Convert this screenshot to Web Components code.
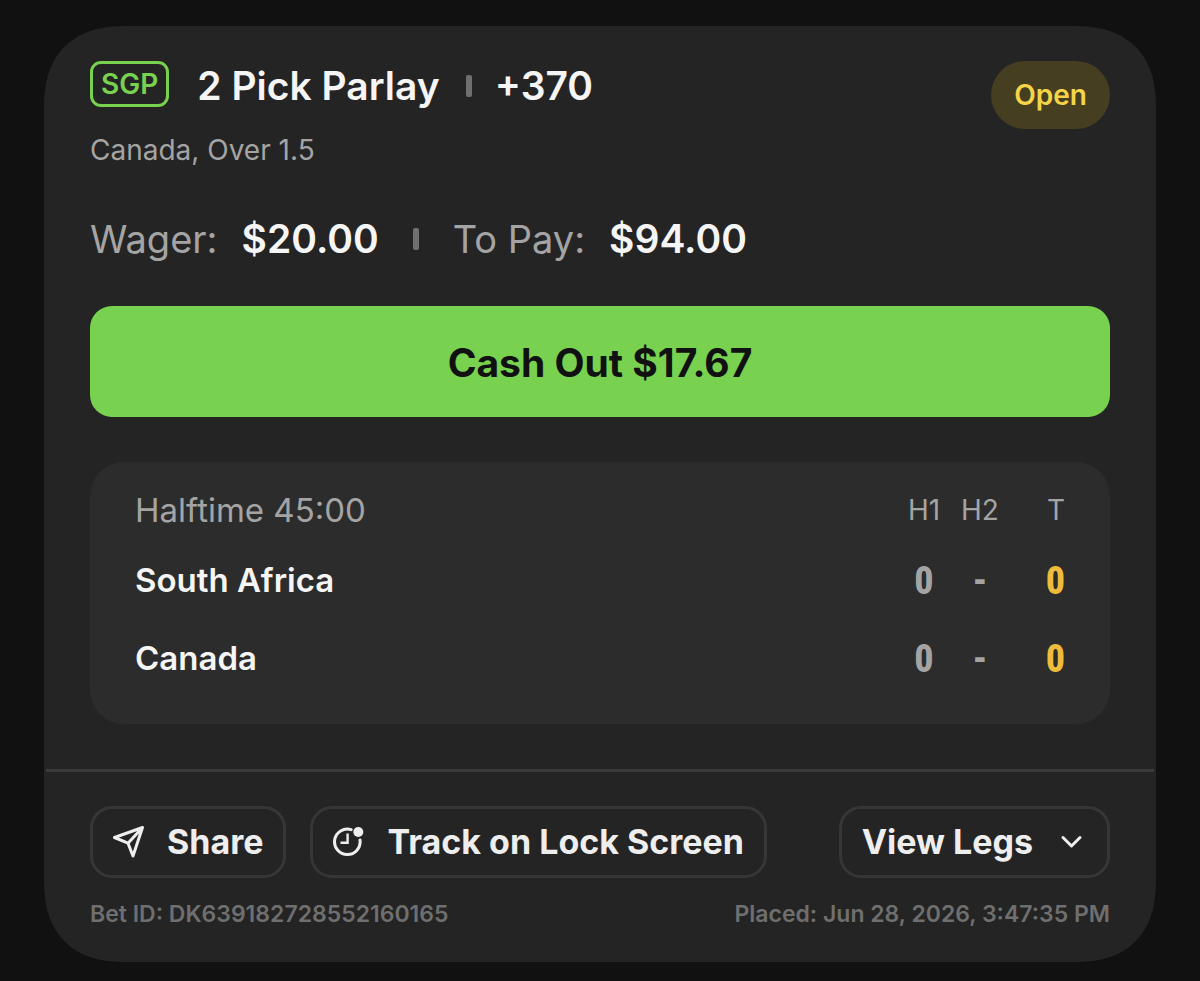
<!doctype html>
<html lang="en">
<head>
<meta charset="utf-8">
<meta name="viewport" content="width=device-width, initial-scale=1">
<title>Open bet</title>
<style>
:root {
  --page: #111111;
  --card: #242424;
  --panel: #2c2c2c;
  --line: #3a3a3a;
  --text: #f5f5f5;
  --muted: #a4a4a4;
  --faint: #6f6f6f;
  --green: #78d250;
  --yellow: #f5d547;
  --gold: #eebb3a;
}

body {
  margin: 0;
  padding: 26px 44px 18px;
  background: var(--page);
  color: var(--text);
  font-family: Inter, "Liberation Sans", sans-serif;
}
</style>
</head>
<body>

<bet-card>
  <bet-heading slot="heading" tag="SGP" odds="+370" status="Open">
    2 Pick Parlay
    <span slot="picks">Canada, Over 1.5</span>
  </bet-heading>
  <bet-stakes wager="$20.00" pay="$94.00"></bet-stakes>
  <cash-out>Cash Out $17.67</cash-out>
  <score-board clock="Halftime 45:00" periods="H1,H2,T">
    <score-line name="South Africa" scores="0,-,0"></score-line>
    <score-line name="Canada" scores="0,-,0"></score-line>
  </score-board>
  <bet-action slot="actions" icon="share">Share</bet-action>
  <bet-action slot="actions" icon="track">Track on Lock Screen</bet-action>
  <bet-action slot="actions" icon="chevron" class="end">View Legs</bet-action>
  <span slot="id">Bet ID: DK639182728552160165</span>
  <span slot="placed">Placed: Jun 28, 2026, 3:47:35 PM</span>
</bet-card>

<script>
class ShadowElement extends HTMLElement {
  constructor() {
    super();
    this.attachShadow({ mode: "open" });
  }

  connectedCallback() {
    this.shadowRoot.innerHTML = this.render();
  }

  attr(name) {
    return this.getAttribute(name) || "";
  }
}

class BetCard extends ShadowElement {
  render() {
    return `
<style>
:host {
  display: block;
  background: var(--card);
  border-radius: 66px;
}

@supports (corner-shape: superellipse(1.3)) {
  :host {
    border-radius: 84px;
    corner-shape: superellipse(1.3);
  }
}

.main {
  display: flex;
  flex-direction: column;
  padding: 35px 46px 45px;
}

footer {
  margin: 0 2px;
  padding: 34px 44px 34px;
  border-top: 3px solid var(--line);
}

.actions {
  display: flex;
  gap: 24px;
}

::slotted(.end) {
  margin-left: auto;
}

.meta {
  display: flex;
  justify-content: space-between;
  margin-top: 22px;
  color: var(--faint);
  font-size: 23px;
  font-weight: 600;
  line-height: 28px;
}
</style>
<div class="main">
  <slot name="heading"></slot>
  <slot></slot>
</div>
<footer>
  <div class="actions"><slot name="actions"></slot></div>
  <div class="meta"><slot name="id"></slot><slot name="placed"></slot></div>
</footer>
`;
  }
}

class BetHeading extends ShadowElement {
  render() {
    return `
<style>
:host {
  display: flex;
  justify-content: space-between;
  align-items: flex-start;
}

.title {
  display: flex;
  align-items: center;
  font-size: 39px;
  font-weight: 600;
  line-height: 50px;
}

.tag {
  box-sizing: border-box;
  align-self: flex-start;
  height: 46px;
  margin-right: 28px;
  padding: 0 8px;
  border: 3px solid var(--green);
  border-radius: 11px;
  color: var(--green);
  font-size: 28px;
  line-height: 40px;
}

h1 {
  margin: 0;
  font: inherit;
}

.bar {
  width: 6px;
  height: 22px;
  margin: 0 23px 0 26px;
  border-radius: 2px;
  background: var(--faint);
}

.picks {
  margin-top: 22px;
  color: var(--muted);
  font-size: 28px;
  font-weight: 400;
  line-height: 34px;
}

.status {
  padding: 0 23px;
  border-radius: 34px;
  background: #453e21;
  color: var(--yellow);
  font-size: 28px;
  font-weight: 600;
  line-height: 68px;
}
</style>
<div>
  <div class="title">
    <span class="tag">${this.attr("tag")}</span>
    <h1><slot></slot></h1>
    <i class="bar"></i>
    <span>${this.attr("odds")}</span>
  </div>
  <div class="picks"><slot name="picks"></slot></div>
</div>
<span class="status">${this.attr("status")}</span>
`;
  }
}

class BetStakes extends ShadowElement {
  render() {
    return `
<style>
:host {
  display: flex;
  align-items: center;
  margin: 47px 0 42px;
  color: var(--muted);
  font-size: 38px;
  font-weight: 400;
  line-height: 50px;
}

b {
  margin-left: 24px;
  color: var(--text);
  font-size: 39px;
  font-weight: 600;
}

.bar {
  width: 6px;
  height: 22px;
  margin: 0 34px;
  border-radius: 2px;
  background: var(--faint);
}
</style>
<span>Wager:</span><b>${this.attr("wager")}</b>
<i class="bar"></i>
<span>To Pay:</span><b>${this.attr("pay")}</b>
`;
  }
}

class CashOut extends ShadowElement {
  render() {
    return `
<style>
:host {
  display: block;
}

button {
  display: block;
  width: 100%;
  padding: 32px 30px 29px;
  border: 0;
  border-radius: 22px;
  background: var(--green);
  color: #111;
  font: inherit;
  font-size: 39px;
  font-weight: 700;
  line-height: 50px;
  cursor: pointer;
}
</style>
<button type="button"><slot></slot></button>
`;
  }
}

// holds the data for one team, the board draws it
class ScoreLine extends HTMLElement {
  get scores() {
    return this.getAttribute("scores").split(",");
  }
}

class ScoreBoard extends ShadowElement {
  render() {
    var periods = this.attr("periods").split(",");
    var head = periods.map(p => `<th scope="col">${p}</th>`).join("");
    var rows = [...this.querySelectorAll("score-line")].map(line => `
  <tr>
    <th scope="row">${line.getAttribute("name")}</th>
    ${line.scores.map(s => `<td>${s}</td>`).join("")}
  </tr>`).join("");
    return `
<style>
:host {
  display: block;
  margin-top: 45px;
  padding: 18px 45px 28px;
  border-radius: 34px;
  background: var(--panel);
}

table {
  width: 100%;
  border-collapse: collapse;
  table-layout: fixed;
}

th, td {
  width: 56px;
  height: 78px;
  padding: 0;
  box-sizing: border-box;
  text-align: center;
}

thead th {
  height: 60px;
  color: var(--muted);
  font-size: 28px;
  font-weight: 400;
}

th:first-child {
  width: auto;
  text-align: left;
  font-size: 33px;
}

tbody th {
  padding-top: 2px;
  font-weight: 600;
}

td {
  padding-top: 4px;
  color: var(--muted);
  font-family: "Roboto Condensed", "Liberation Sans Narrow", Roboto, sans-serif;
  font-size: 38px;
  font-weight: 800;
}

th:last-child, td:last-child {
  width: 57px;
  text-align: right;
}

td:last-child {
  color: var(--gold);
}
</style>
<table>
  <thead><tr><th scope="col">${this.attr("clock")}</th>${head}</tr></thead>
  <tbody>${rows}</tbody>
</table>
`;
  }
}

const ICONS = {
  share: `<path d="M1.5 11.5 29.5 1.5 20 30 15 17.2Z M15 17.2 29.5 1.5"/>`,
  track: `
    <path d="M18.2 3.6A12.8 12.8 0 1 0 27 14"/>
    <path d="M14.6 7.5V16.8H7.5" stroke-width="2.4" stroke-linecap="butt" stroke-linejoin="miter"/>
    <circle cx="25.3" cy="6" r="5" fill="currentColor" stroke="none"/>`,
  chevron: `<path d="M8 11.5 16.5 20 25 11.5"/>`
};

class BetAction extends ShadowElement {
  render() {
    var icon = this.attr("icon");
    return `
<style>
:host {
  display: block;
}

button {
  display: flex;
  align-items: center;
  gap: 22px;
  padding: 12px 20px;
  border: 3px solid #363636;
  border-radius: 22px;
  background: none;
  color: #eee;
  font: inherit;
  font-size: 34px;
  font-weight: 700;
  line-height: 42px;
  white-space: nowrap;
  cursor: pointer;
}

.chevron {
  flex-direction: row-reverse;
}

svg {
  width: 32px;
  height: 32px;
  fill: none;
  stroke: currentColor;
  stroke-width: 3;
  stroke-linecap: round;
  stroke-linejoin: round;
}
</style>
<button type="button" class="${icon}">
  <svg viewBox="0 0 32 32" aria-hidden="true">${ICONS[icon]}</svg>
  <span><slot></slot></span>
</button>
`;
  }
}

window.customElements.define("score-line", ScoreLine);
window.customElements.define("score-board", ScoreBoard);
window.customElements.define("bet-heading", BetHeading);
window.customElements.define("bet-stakes", BetStakes);
window.customElements.define("cash-out", CashOut);
window.customElements.define("bet-action", BetAction);
window.customElements.define("bet-card", BetCard);
</script>
</body>
</html>
